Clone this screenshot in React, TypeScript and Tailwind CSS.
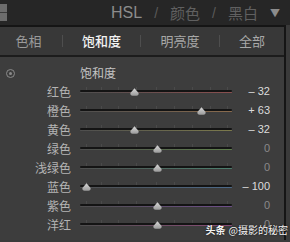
import React from "react";

const CJK = { fontFamily: '"Noto Sans CJK SC", "Noto Sans", sans-serif' };
const LAT = { fontFamily: '"Liberation Sans", "Noto Sans CJK SC", sans-serif' };

type Row = { label: string; value: number; text: string; color: string };

const rows: Row[] = [
  { label: "红色", value: -32, text: "– 32", color: "#8a4f4f" },
  { label: "橙色", value: 63, text: "+ 63", color: "#8a6b4d" },
  { label: "黄色", value: -32, text: "– 32", color: "#7c7a4c" },
  { label: "绿色", value: 0, text: "0", color: "#5f7f4c" },
  { label: "浅绿色", value: 0, text: "0", color: "#4c7f6e" },
  { label: "蓝色", value: -100, text: "– 100", color: "#4c6a8a" },
  { label: "紫色", value: 0, text: "0", color: "#6e4f8a" },
  { label: "洋红", value: 0, text: "0", color: "#8a4c78" },
];

function Thumb() {
  return (
    <svg width="9" height="8" viewBox="0 0 9 8">
      <defs>
        <linearGradient id="tg" x1="0" y1="0" x2="0" y2="1">
          <stop offset="0" stopColor="#d8d8d8" />
          <stop offset="1" stopColor="#9a9a9a" />
        </linearGradient>
      </defs>
      <path d="M4.5 0.3 L8.6 5 Q8.8 7.8 6.5 7.8 L2.5 7.8 Q0.2 7.8 0.4 5 Z" fill="url(#tg)" />
    </svg>
  );
}

function Slider({ value, color }: { value: number; color: string }) {
  const pos = 6 + ((value + 100) / 200) * 142;
  const ticks = [6, 21, 38, 56, 76, 94, 112, 130, 147];
  return (
    <div className="relative w-[152px] h-[19px] flex items-center">
      {ticks.map((t) => (
        <div
          key={t}
          className="absolute top-[5px] w-px h-[3px] bg-[#4a4a4a]"
          style={{ left: t }}
        />
      ))}
      <div className="w-full flex flex-col">
        <div className="h-[2px] w-full rounded-full bg-[#141414]" />
        <div
          className="h-px w-full rounded-full"
          style={{ background: `linear-gradient(to right, #4e4e4e, ${color})` }}
        />
      </div>
      <div className="absolute top-[6px]" style={{ left: pos - 4.5 }}>
        <Thumb />
      </div>
    </div>
  );
}

export default function App() {
  return (
    <div className="relative w-[290px] h-[242px] overflow-hidden bg-[#3a3a3a]" style={CJK}>
      {/* top header */}
      <div className="h-[25px] bg-[#262626] flex items-center justify-between">
        <div className="w-[7px] h-[17px] bg-[#6c6c6c] flex flex-col justify-center">
          <div className="h-px bg-[#3a3a3a]" />
        </div>
        <div className="flex items-center pr-[10px] text-[15px] leading-none">
          <span className="text-[#8c8c8c] text-[16px]" style={LAT}>HSL</span>
          <span className="text-[#5a5a5a] mx-[12px] text-[14px]" style={LAT}>/</span>
          <span className="text-[#606060]">颜色</span>
          <span className="text-[#5a5a5a] mx-[12px] text-[14px]" style={LAT}>/</span>
          <span className="text-[#606060]">黑白</span>
          <span className="text-[#8c8c8c] ml-[12px] text-[10px]">▼</span>
        </div>
      </div>

      <div className="flex">
        <div className="w-[286px] border-t-2 border-r-2 border-[#151515] bg-[#3d3d3d]">
          {/* tabs */}
          <div className="h-[30px] flex items-center bg-[#383838] border-b-2 border-[#1c1c1c] text-[13px]">
            <div className="w-[62px] text-center pr-[5px] text-[#9a9a9a]">色相</div>
            <div className="w-px h-[12px] bg-[#4e4e4e]" />
            <div className="w-[77px] text-center text-[#f2f2f2] font-medium">饱和度</div>
            <div className="w-px h-[12px] bg-[#4e4e4e]" />
            <div className="w-[78px] text-center text-[#a8a8a8]">明亮度</div>
            <div className="w-px h-[12px] bg-[#4e4e4e]" />
            <div className="flex-1 text-center text-[#a8a8a8]">全部</div>
          </div>

          {/* content */}
          <div className="pt-[7px] h-[183px]">
            <div className="h-[18px] flex items-center">
              <div className="w-[80px] pl-[6px] flex items-center">
                <div className="w-[9px] h-[9px] rounded-full border border-[#8a8a8a] flex items-center justify-center">
                  <div className="w-[3px] h-[3px] rounded-full bg-[#8a8a8a]" />
                </div>
              </div>
              <span className="text-[12px] text-[#c4c4c4] leading-none">饱和度</span>
            </div>
            {rows.map((r) => (
              <div key={r.label} className="h-[19px] flex items-center">
                <div className="w-[71px] text-right text-[12px] text-[#b4b4b4] leading-none">{r.label}</div>
                <div className="ml-[9px]">
                  <Slider value={r.value} color={r.color} />
                </div>
                <div
                  className={`w-[38px] text-right text-[11px] leading-none ${r.value === 0 ? "text-[#8a8a8a]" : "text-[#dcdcdc]"}`}
                  style={LAT}
                >
                  {r.text}
                </div>
              </div>
            ))}
          </div>
        </div>
        <div className="flex-1 bg-[#3a3a3a]" />
      </div>

      {/* watermark */}
      <div
        className="absolute right-[2px] bottom-[7px] text-[10px] leading-none text-[#f4f4f4] flex items-center gap-[3px]"
        style={{ textShadow: "0 0 2px rgba(0,0,0,0.8)" }}
      >
        <span className="font-bold">头条</span>
        <span>@摄影的秘密</span>
      </div>
    </div>
  );
}
